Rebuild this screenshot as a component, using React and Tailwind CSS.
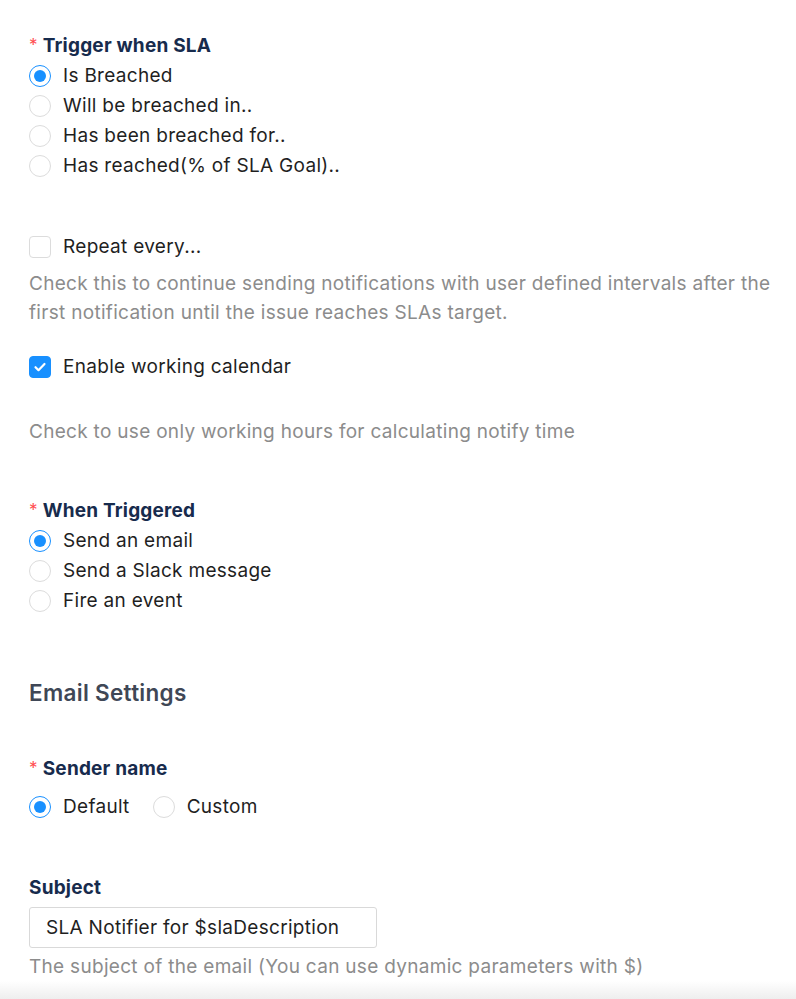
import { useState } from "react";

function Radio({ checked, label, onClick }) {
  return (
    <button type="button" onClick={onClick} className="flex items-center h-[30px] text-left">
      <span
        className={
          "w-[22px] h-[22px] rounded-full flex items-center justify-center bg-white " +
          (checked ? "border-[1.5px] border-[#1890ff]" : "border-[1.5px] border-[#dcdcdc]")
        }
      >
        {checked && <span className="w-[12px] h-[12px] rounded-full bg-[#1890ff]" />}
      </span>
      <span className="ml-[12px] text-[19px] tracking-[0.3px] text-[#1f1f1f]">{label}</span>
    </button>
  );
}

function Checkbox({ checked, label, onClick }) {
  return (
    <button type="button" onClick={onClick} className="flex items-center h-[30px] text-left">
      <span
        className={
          "w-[22px] h-[22px] rounded-[4px] flex items-center justify-center " +
          (checked ? "bg-[#1890ff] border-[1.5px] border-[#1890ff]" : "bg-white border-[1.5px] border-[#dcdcdc]")
        }
      >
        {checked && (
          <svg width="14" height="14" viewBox="0 0 14 14" fill="none">
            <path d="M2.5 7.2l3 3 6-6.2" stroke="white" strokeWidth="2.2" strokeLinecap="round" strokeLinejoin="round" />
          </svg>
        )}
      </span>
      <span className="ml-[12px] text-[19px] tracking-[0.3px] text-[#1f1f1f]">{label}</span>
    </button>
  );
}

function Label({ children, required }) {
  return (
    <div className="h-[30px] flex items-center text-[19px] tracking-[0.2px] font-bold text-[#172b4d]">
      {required && <span className="text-[#ff4d4f] font-normal mr-[5px] text-[17px]">*</span>}
      {children}
    </div>
  );
}

export default function App() {
  const [trigger, setTrigger] = useState(0);
  const [repeat, setRepeat] = useState(false);
  const [calendar, setCalendar] = useState(true);
  const [action, setAction] = useState(0);
  const [sender, setSender] = useState(0);
  const [subject, setSubject] = useState("SLA Notifier for $slaDescription");

  const triggers = ["Is Breached", "Will be breached in..", "Has been breached for..", "Has reached(% of SLA Goal).."];
  const actions = ["Send an email", "Send a Slack message", "Fire an event"];

  return (
    <div className="min-h-screen bg-white flex flex-col font-['Inter','Liberation_Sans',sans-serif]">
      <div className="pl-[29px] pr-[18px] pt-[31px] flex-1">
        <Label required>Trigger when SLA</Label>
        <div className="flex flex-col">
          {triggers.map((t, i) => (
            <Radio key={t} label={t} checked={trigger === i} onClick={() => setTrigger(i)} />
          ))}
        </div>

        <div className="mt-[51px]">
          <Checkbox label="Repeat every..." checked={repeat} onClick={() => setRepeat(!repeat)} />
        </div>
        <p className="mt-[7px] text-[19px] tracking-[0.3px] leading-[29px] text-[#8c8c8c]">
          Check this to continue sending notifications with user defined intervals after the first notification until the issue reaches SLAs target.
        </p>

        <div className="mt-[25px]">
          <Checkbox label="Enable working calendar" checked={calendar} onClick={() => setCalendar(!calendar)} />
        </div>
        <p className="mt-[35px] text-[19px] tracking-[0.3px] leading-[29px] text-[#8c8c8c]">
          Check to use only working hours for calculating notify time
        </p>

        <div className="mt-[50px]">
          <Label required>When Triggered</Label>
        </div>
        <div className="flex flex-col">
          {actions.map((t, i) => (
            <Radio key={t} label={t} checked={action === i} onClick={() => setAction(i)} />
          ))}
        </div>

        <h2 className="mt-[59px] h-[36px] flex items-center text-[22.5px] tracking-[0.3px] font-semibold text-[#3f4756]">Email Settings</h2>

        <div className="mt-[43px]">
          <Label required>Sender name</Label>
        </div>
        <div className="mt-[8px] flex items-center gap-[23px]">
          <Radio label="Default" checked={sender === 0} onClick={() => setSender(0)} />
          <Radio label="Custom" checked={sender === 1} onClick={() => setSender(1)} />
        </div>

        <div className="mt-[51px]">
          <Label>Subject</Label>
        </div>
        <input
          value={subject}
          onChange={(e) => setSubject(e.target.value)}
          className="mt-[4px] block w-[348px] h-[41px] border border-[#d9d9d9] rounded-[3px] px-[16px] text-[19px] tracking-[0.3px] text-[#1f1f1f] outline-none"
        />
        <p className="mt-[4px] text-[19px] tracking-[0.3px] leading-[29px] text-[#8c8c8c]">
          The subject of the email (You can use dynamic parameters with $)
        </p>
      </div>
      <div className="h-[18px] bg-gradient-to-b from-white to-[#eeeeee]" />
    </div>
  );
}
